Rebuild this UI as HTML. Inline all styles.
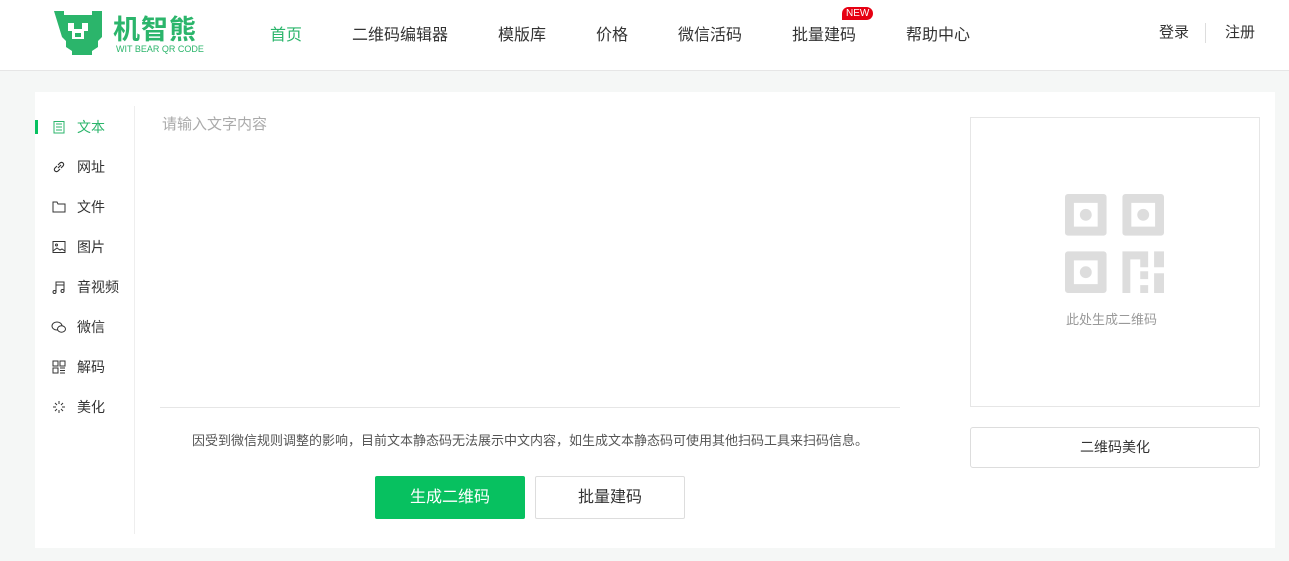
<!DOCTYPE html>
<html><head><meta charset="utf-8"><style>
*{margin:0;padding:0;box-sizing:border-box}
body{width:1289px;height:561px;background:#f5f7f6;font-family:"Liberation Sans","Noto Sans CJK SC",sans-serif;color:#333;position:relative;overflow:hidden}
.hdr{position:absolute;left:0;top:0;width:1289px;height:71px;background:#fff;border-bottom:1px solid #e6e6e6}
.nav{position:absolute;top:21px;font-size:16px;color:#333}
.card{position:absolute;left:35px;top:92px;width:1240px;height:456px;background:#fff}
.side{position:absolute;left:0;top:14px;width:100px;height:428px;border-right:1px solid #eee}
.it{position:absolute;left:16px;font-size:14px;color:#333;display:flex;align-items:center}
.it svg{width:16px;height:16px;margin-right:10px}
.t{position:absolute;font-size:13px}
</style></head><body>
<div class="hdr">
<svg style="position:absolute;left:54px;top:11px" width="48" height="44" viewBox="0 0 48 44"><path fill="#2bb56b" d="M0 0h10v4h28V0h10v26l-4 4v6l-6 4v4H18v-4l-6-4v-6l-4-4zM14 12v8h4v8h12v-8h4v-8h-6v6h-8v-6zM21 22v4h6v-4z"/></svg>
<div style="position:absolute;left:113px;top:8px;font-size:27px;font-weight:bold;color:#2bb56b;letter-spacing:1px">机智熊</div>
<div style="position:absolute;left:116px;top:44px;font-size:9px;color:#2bb56b">WIT BEAR QR CODE</div>
<div class="nav" style="left:270px;color:#2bb56b">首页</div>
<div class="nav" style="left:352px">二维码编辑器</div>
<div class="nav" style="left:498px">模版库</div>
<div class="nav" style="left:596px">价格</div>
<div class="nav" style="left:678px">微信活码</div>
<div class="nav" style="left:792px">批量建码</div>
<div style="position:absolute;left:842px;top:7px;background:#e60012;color:#fff;font-size:10px;padding:0 4px;border-radius:7px 7px 7px 0;line-height:13px">NEW</div>
<div class="nav" style="left:906px">帮助中心</div>
<div class="nav" style="left:1159px;font-size:15px">登录</div>
<div style="position:absolute;left:1205px;top:23px;width:1px;height:20px;background:#ddd"></div>
<div class="nav" style="left:1225px;font-size:15px">注册</div>
</div>
<div class="card">
<div class="side">
<div style="position:absolute;left:0;top:14px;width:3px;height:14px;background:#07c160"></div>
<div class="it" style="top:11px;color:#2bb56b"><svg viewBox="0 0 16 16" fill="none" stroke="#2bb56b"><rect x="3" y="2.5" width="10" height="11.5"/><path d="M5 5h6M5 8h6M5 11h6"/></svg>文本</div>
<div class="it" style="top:51px"><svg viewBox="0 0 16 16" fill="none" stroke="#333" stroke-width="1.2"><path d="M7 9l3-3M6 7L4 9a2 2 0 003 3l2-2M10 9l2-2a2 2 0 00-3-3L7 6"/></svg>网址</div>
<div class="it" style="top:91px"><svg viewBox="0 0 16 16" fill="none" stroke="#333"><path d="M2 3h4l1 2h7v8H2z"/></svg>文件</div>
<div class="it" style="top:131px"><svg viewBox="0 0 16 16" fill="none" stroke="#333"><rect x="2" y="2.5" width="12" height="11"/><circle cx="5.5" cy="6" r="1"/><path d="M2 12l4-3 3 2 2-1 3 2"/></svg>图片</div>
<div class="it" style="top:171px"><svg viewBox="0 0 16 16" fill="none" stroke="#333"><path d="M5 13V3h8v9"/><circle cx="3.5" cy="13" r="1.5"/><circle cx="11.5" cy="12" r="1.5"/><path d="M5 6h8"/></svg>音视频</div>
<div class="it" style="top:211px"><svg viewBox="0 0 16 16" fill="none" stroke="#333"><ellipse cx="6" cy="7" rx="5" ry="4"/><ellipse cx="10.5" cy="10" rx="4" ry="3.2" fill="#fff"/></svg>微信</div>
<div class="it" style="top:251px"><svg viewBox="0 0 16 16" fill="none" stroke="#333"><rect x="2" y="2" width="5" height="5"/><rect x="9" y="2" width="5" height="5"/><rect x="2" y="9" width="5" height="5"/><path d="M9 9h5M9 11.5h5M9 14h5"/></svg>解码</div>
<div class="it" style="top:291px"><svg viewBox="0 0 16 16" fill="none" stroke="#333"><path d="M8 2v3M8 11v3M2 8h3M11 8h3M4 4l2 2M10 10l2 2M12 4l-2 2M4 12l2-2"/></svg>美化</div>
</div>
<div style="position:absolute;left:127px;top:21px;font-size:15px;color:#aaa">请输入文字内容</div>
<div style="position:absolute;left:125px;top:315px;width:740px;height:1px;background:#e6e6e6"></div>
<div class="t" style="left:157px;top:338px;color:#555">因受到微信规则调整的影响，目前文本静态码无法展示中文内容，如生成文本静态码可使用其他扫码工具来扫码信息。</div>
<div style="position:absolute;left:340px;top:384px;width:150px;height:43px;background:#07c160;color:#fff;font-size:16px;text-align:center;line-height:43px;border-radius:2px">生成二维码</div>
<div style="position:absolute;left:500px;top:384px;width:150px;height:43px;border:1px solid #ddd;color:#333;font-size:16px;text-align:center;line-height:41px;border-radius:2px">批量建码</div>
<div style="position:absolute;left:935px;top:25px;width:290px;height:290px;border:1px solid #e6e6e6"></div>
<svg style="position:absolute;left:1030px;top:102px" width="99" height="99" viewBox="0 0 100 100" fill="#ddd"><path fill-rule="evenodd" d="M3 0h36a3 3 0 013 3v36a3 3 0 01-3 3H3a3 3 0 01-3-3V3a3 3 0 013-3zM9 9v24h24V9z"/><path fill-rule="evenodd" d="M61 0h36a3 3 0 013 3v36a3 3 0 01-3 3H61a3 3 0 01-3-3V3a3 3 0 013-3zM67 9v24h24V9z"/><path fill-rule="evenodd" d="M3 58h36a3 3 0 013 3v36a3 3 0 01-3 3H3a3 3 0 01-3-3V61a3 3 0 013-3zM9 67v24h24V67z"/><circle cx="21" cy="21" r="6"/><circle cx="79" cy="21" r="6"/><circle cx="21" cy="79" r="6"/><path d="M58 58h26v16h-8v-8H66v34h-8zM90 58h10v16H90zM76 78h8v8h-8zM90 80h10v20H90zM76 92h8v8h-8z"/></svg>
<div class="t" style="left:1031px;top:217px;color:#999">此处生成二维码</div>
<div style="position:absolute;left:935px;top:335px;width:290px;height:41px;border:1px solid #ddd;border-radius:3px;text-align:center;line-height:39px;font-size:14px;color:#333">二维码美化</div>
</div>
</body></html>
